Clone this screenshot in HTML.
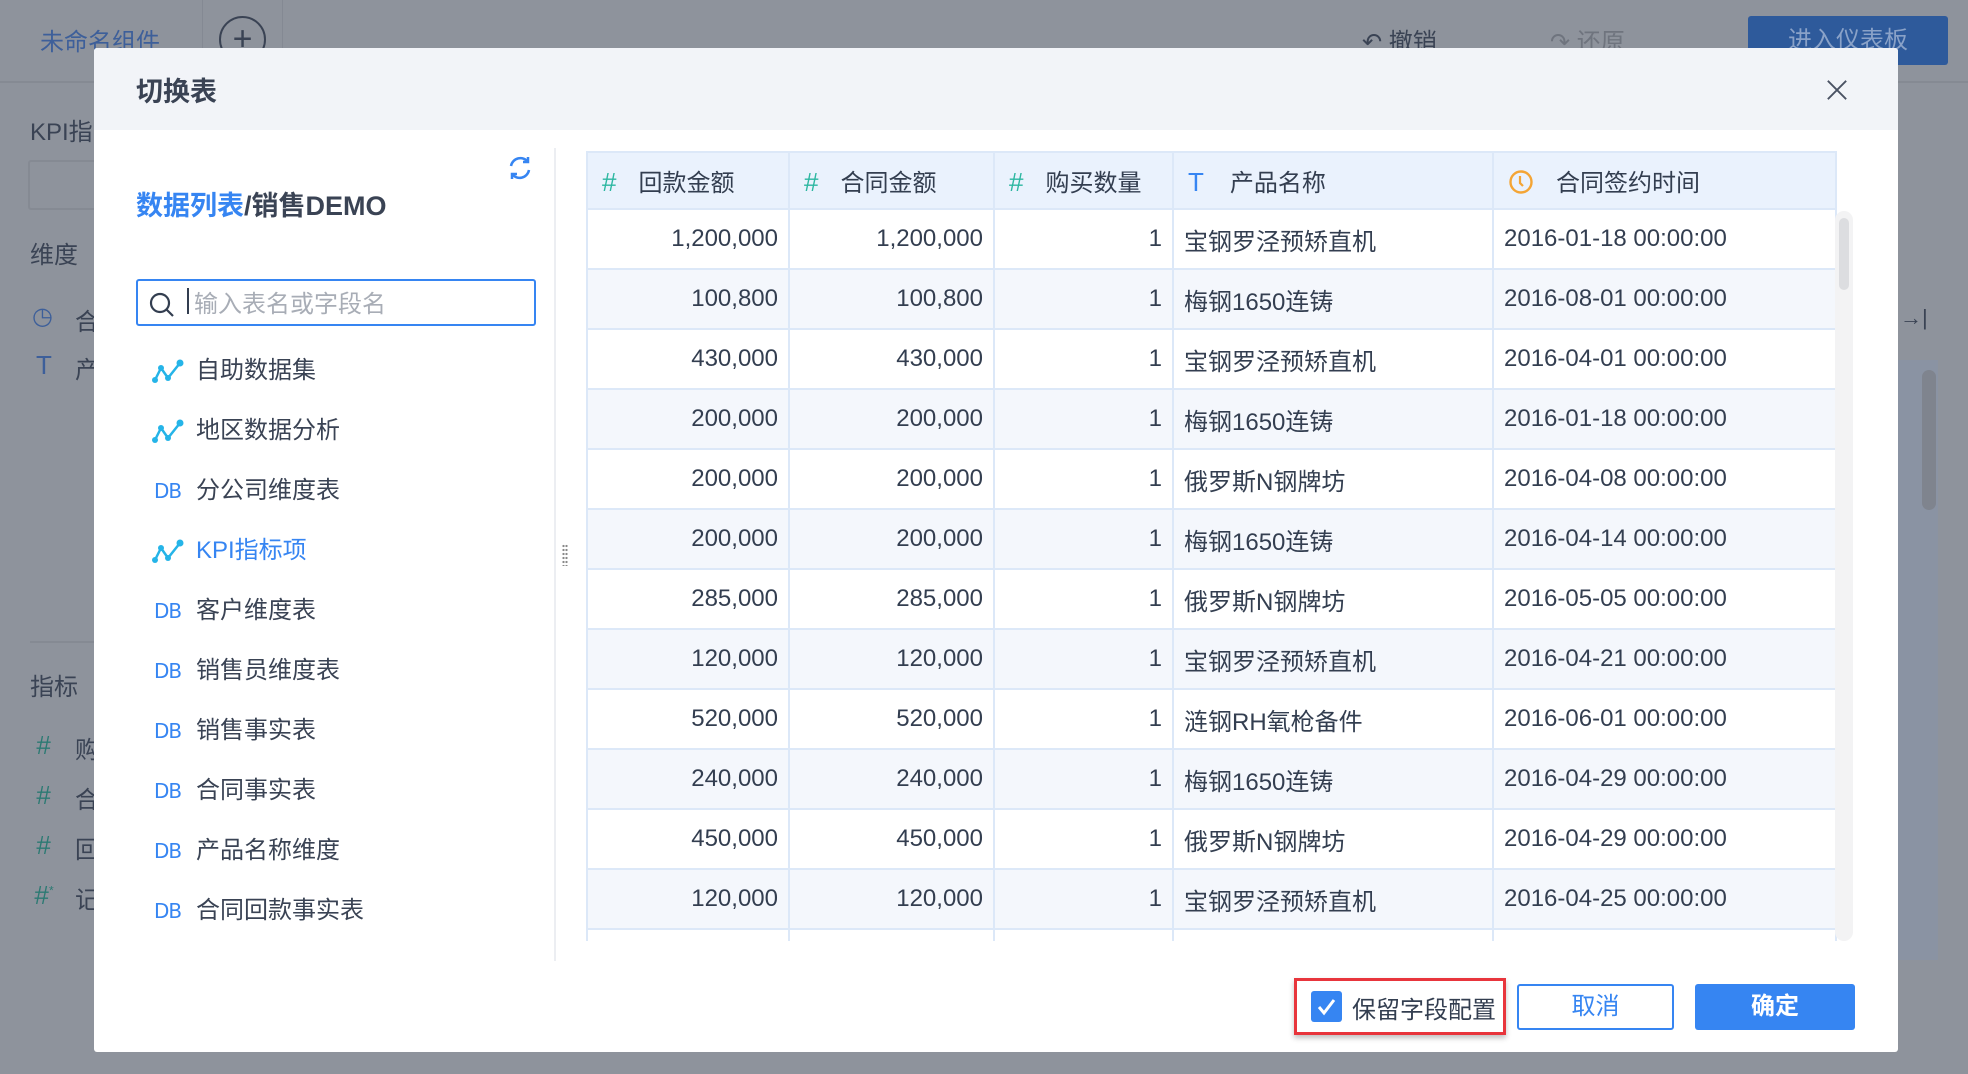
<!DOCTYPE html>
<html><head><meta charset="utf-8"><style>
*{margin:0;padding:0;box-sizing:border-box}
body{width:1968px;height:1074px;overflow:hidden;background:#8e939c;font-family:"Liberation Sans","Noto Sans CJK SC",sans-serif;position:relative;color:#333e50}
.a{position:absolute;white-space:nowrap}
.bg{color:#3a4354}
.modal{position:absolute;left:94px;top:48px;width:1804px;height:1004px;background:#fff;border-radius:3px;overflow:hidden}
.hdr{position:absolute;left:0;top:0;width:100%;height:82px;background:#f2f4f8}
.item{position:absolute;left:42px;width:380px;white-space:nowrap;font-size:24px;color:#3a4354;height:30px;line-height:30px}
.item .ic{position:absolute;left:15px;top:0;width:34px;height:30px}
.item span.t{position:absolute;left:60px;top:0}
.db{font-family:"DejaVu Sans",sans-serif;font-size:20px;color:#3685f2;position:absolute;left:18px;top:0;letter-spacing:-1px}
table{border-collapse:collapse;position:absolute;left:492px;top:103px;table-layout:fixed}
td,th{border:2px solid #dce8f8;height:60px;font-size:24px;font-weight:normal;color:#333e50;padding:0 10px;white-space:nowrap}
th{height:57px;background:#eaf2fd;text-align:left;padding-left:14px}
tr:nth-child(odd) td{background:#f4f7fc}
td.n{text-align:right}
.hash{color:#2db7a1;font-size:26px;margin-right:22px}
</style></head><body>
<div class="a" style="left:40px;top:22px;font-size:24px;color:#3d5f9a">未命名组件</div>
<div class="a" style="left:202px;top:0;width:1px;height:82px;background:#848993"></div>
<div class="a" style="left:219px;top:16px;width:47px;height:47px;border:2px solid #3a4354;border-radius:50%;text-align:center;line-height:42px;font-size:34px;color:#3a4354">+</div>
<div class="a" style="left:282px;top:0;width:1px;height:82px;background:#848993"></div>
<div class="a" style="left:0;top:81px;width:1968px;height:2px;background:#858a93"></div>
<div class="a bg" style="left:1362px;top:22px;font-size:24px">↶ 撤销</div>
<div class="a" style="left:1550px;top:22px;font-size:24px;color:#6f747e">↷ 还原</div>
<div class="a" style="left:1748px;top:16px;width:200px;height:49px;background:#2e5a9b;border-radius:3px;color:#8aa2c8;font-size:24px;text-align:center;line-height:49px">进入仪表板</div>
<div class="a bg" style="left:30px;top:112px;font-size:24px">KPI指</div>
<div class="a" style="left:28px;top:160px;width:80px;height:50px;border:2px solid #858a93;border-radius:3px"></div>
<div class="a bg" style="left:30px;top:235px;font-size:24px">维度</div>
<div class="a" style="left:32px;top:302px;font-size:24px;color:#3d5f9a">◷</div>
<div class="a bg" style="left:75px;top:302px;font-size:24px">合</div>
<div class="a" style="left:36px;top:350px;font-size:26px;color:#3d5f9a">T</div>
<div class="a bg" style="left:75px;top:350px;font-size:24px">产</div>
<div class="a" style="left:30px;top:641px;width:70px;height:2px;background:#858a93"></div>
<div class="a bg" style="left:30px;top:667px;font-size:24px">指标</div>
<div class="a" style="left:36px;top:730px;font-size:26px;color:#2c7a73;font-style:italic">#</div><div class="a bg" style="left:75px;top:730px;font-size:24px">购</div>
<div class="a" style="left:36px;top:780px;font-size:26px;color:#2c7a73;font-style:italic">#</div><div class="a bg" style="left:75px;top:780px;font-size:24px">合</div>
<div class="a" style="left:36px;top:830px;font-size:26px;color:#2c7a73;font-style:italic">#</div><div class="a bg" style="left:75px;top:830px;font-size:24px">回</div>
<div class="a" style="left:34px;top:880px;font-size:26px;color:#2c7a73;font-style:italic">#<sup style="font-size:12px">*</sup></div><div class="a bg" style="left:75px;top:880px;font-size:24px">记</div>
<div class="a bg" style="left:1900px;top:305px;font-size:22px">→|</div>
<div class="a" style="left:1896px;top:360px;width:42px;height:600px;background:#8a93a3"></div>
<div class="a" style="left:1922px;top:370px;width:14px;height:140px;background:#7f848e;border-radius:7px"></div>

<div class="modal">
 <div class="hdr"></div>
 <div class="a" style="left:42px;top:22px;font-size:27px;font-weight:bold;color:#3a4354">切换表</div>
 <svg class="a" style="left:1732px;top:31px" width="22" height="22" viewBox="0 0 24 24"><path d="M2 2L22 22M22 2L2 22" stroke="#4a5263" stroke-width="2"/></svg>
 <svg class="a" style="left:412px;top:106px" width="28" height="28" viewBox="0 0 28 28" fill="none" stroke="#3685f2" stroke-width="2.5"><path d="M5 12A9.5 9.5 0 0 1 22 8"/><path d="M23 16A9.5 9.5 0 0 1 6 20"/><path d="M22 3V8H17"/><path d="M6 25V20H11"/></svg>
 <div class="a" style="left:42px;top:136px;font-size:27px;font-weight:bold;color:#3a4354"><span style="color:#3685f2">数据列表</span>/销售DEMO</div>
 <div class="a" style="left:42px;top:231px;width:400px;height:47px;border:2px solid #3685f2;border-radius:3px"></div>
 <svg class="a" style="left:54px;top:243px" width="28" height="28" viewBox="0 0 28 28" fill="none" stroke="#333e50" stroke-width="2.2"><circle cx="12" cy="12" r="9"/><path d="M18.5 18.5L25 25"/></svg>
 <div class="a" style="left:93px;top:240px;width:2px;height:26px;background:#333e50"></div>
 <div class="a" style="left:100px;top:236px;font-size:24px;color:#a8adb6">输入表名或字段名</div>

 <div class="item" style="top:308px"><svg class="ic" viewBox="0 0 34 30"><path d="M4 24L10 12L17 22L29 7" stroke="#25b4e8" stroke-width="2.5" fill="none"/><circle cx="4" cy="24" r="3" fill="#25b4e8"/><circle cx="10" cy="12" r="3" fill="#25b4e8"/><circle cx="17" cy="22" r="3" fill="#25b4e8"/><circle cx="29" cy="7" r="3.5" fill="#25b4e8"/></svg><span class="t">自助数据集</span></div>
 <div class="item" style="top:368px"><svg class="ic" viewBox="0 0 34 30"><path d="M4 24L10 12L17 22L29 7" stroke="#25b4e8" stroke-width="2.5" fill="none"/><circle cx="4" cy="24" r="3" fill="#25b4e8"/><circle cx="10" cy="12" r="3" fill="#25b4e8"/><circle cx="17" cy="22" r="3" fill="#25b4e8"/><circle cx="29" cy="7" r="3.5" fill="#25b4e8"/></svg><span class="t">地区数据分析</span></div>
 <div class="item" style="top:428px"><span class="db">DB</span><span class="t">分公司维度表</span></div>
 <div class="item" style="top:488px;color:#3685f2"><svg class="ic" viewBox="0 0 34 30"><path d="M4 24L10 12L17 22L29 7" stroke="#25b4e8" stroke-width="2.5" fill="none"/><circle cx="4" cy="24" r="3" fill="#25b4e8"/><circle cx="10" cy="12" r="3" fill="#25b4e8"/><circle cx="17" cy="22" r="3" fill="#25b4e8"/><circle cx="29" cy="7" r="3.5" fill="#25b4e8"/></svg><span class="t">KPI指标项</span></div>
 <div class="item" style="top:548px"><span class="db">DB</span><span class="t">客户维度表</span></div>
 <div class="item" style="top:608px"><span class="db">DB</span><span class="t">销售员维度表</span></div>
 <div class="item" style="top:668px"><span class="db">DB</span><span class="t">销售事实表</span></div>
 <div class="item" style="top:728px"><span class="db">DB</span><span class="t">合同事实表</span></div>
 <div class="item" style="top:788px"><span class="db">DB</span><span class="t">产品名称维度</span></div>
 <div class="item" style="top:848px"><span class="db">DB</span><span class="t">合同回款事实表</span></div>

 <div class="a" style="left:460px;top:100px;width:2px;height:813px;background:#eceef2"></div>
 <div class="a" style="left:468px;top:496px;width:6px;height:22px;background:radial-gradient(circle,#888 1px,transparent 1.3px) 0 0/3px 4px"></div>

 <div class="a" style="left:492px;top:103px;width:1251px;height:790px;overflow:hidden">
 <table style="left:0;top:0">
  <colgroup><col style="width:202px"><col style="width:205px"><col style="width:179px"><col style="width:320px"><col style="width:343px"></colgroup>
  <tr><th><span class="hash">#</span>回款金额</th><th><span class="hash">#</span>合同金额</th><th><span class="hash">#</span>购买数量</th><th><span style="color:#3685f2;font-size:26px;margin-right:26px">T</span>产品名称</th><th><svg width="26" height="26" viewBox="0 0 26 26" style="vertical-align:-4px;margin-right:22px"><circle cx="13" cy="13" r="10.5" fill="none" stroke="#f4a535" stroke-width="2.4"/><path d="M12 7V14L15 17" stroke="#f4a535" stroke-width="2.2" fill="none"/></svg>合同签约时间</th></tr>
  <tr><td class="n">1,200,000</td><td class="n">1,200,000</td><td class="n">1</td><td>宝钢罗泾预矫直机</td><td>2016-01-18 00:00:00</td></tr>
  <tr><td class="n">100,800</td><td class="n">100,800</td><td class="n">1</td><td>梅钢1650连铸</td><td>2016-08-01 00:00:00</td></tr>
  <tr><td class="n">430,000</td><td class="n">430,000</td><td class="n">1</td><td>宝钢罗泾预矫直机</td><td>2016-04-01 00:00:00</td></tr>
  <tr><td class="n">200,000</td><td class="n">200,000</td><td class="n">1</td><td>梅钢1650连铸</td><td>2016-01-18 00:00:00</td></tr>
  <tr><td class="n">200,000</td><td class="n">200,000</td><td class="n">1</td><td>俄罗斯N钢牌坊</td><td>2016-04-08 00:00:00</td></tr>
  <tr><td class="n">200,000</td><td class="n">200,000</td><td class="n">1</td><td>梅钢1650连铸</td><td>2016-04-14 00:00:00</td></tr>
  <tr><td class="n">285,000</td><td class="n">285,000</td><td class="n">1</td><td>俄罗斯N钢牌坊</td><td>2016-05-05 00:00:00</td></tr>
  <tr><td class="n">120,000</td><td class="n">120,000</td><td class="n">1</td><td>宝钢罗泾预矫直机</td><td>2016-04-21 00:00:00</td></tr>
  <tr><td class="n">520,000</td><td class="n">520,000</td><td class="n">1</td><td>涟钢RH氧枪备件</td><td>2016-06-01 00:00:00</td></tr>
  <tr><td class="n">240,000</td><td class="n">240,000</td><td class="n">1</td><td>梅钢1650连铸</td><td>2016-04-29 00:00:00</td></tr>
  <tr><td class="n">450,000</td><td class="n">450,000</td><td class="n">1</td><td>俄罗斯N钢牌坊</td><td>2016-04-29 00:00:00</td></tr>
  <tr><td class="n">120,000</td><td class="n">120,000</td><td class="n">1</td><td>宝钢罗泾预矫直机</td><td>2016-04-25 00:00:00</td></tr>
  <tr><td></td><td></td><td></td><td></td><td></td></tr>
 </table>
 </div>
 <div class="a" style="left:1741px;top:163px;width:18px;height:730px;background:#f3f3f4;border-radius:9px"></div>
 <div class="a" style="left:1745px;top:170px;width:10px;height:72px;background:#dcdde0;border-radius:5px"></div>

 <div class="a" style="left:1200px;top:930px;width:212px;height:57px;border:3px solid #e8353c;box-shadow:0 3px 5px rgba(0,0,0,.25)"></div>
 <div class="a" style="left:1217px;top:943px;width:31px;height:31px;background:#3685f2;border-radius:3px"><svg width="31" height="31" viewBox="0 0 31 31"><path d="M8 16L13 22L23 9" stroke="#fff" stroke-width="3" fill="none"/></svg></div>
 <div class="a" style="left:1258px;top:942px;font-size:24px;color:#333e50">保留字段配置</div>
 <div class="a" style="left:1423px;top:936px;width:157px;height:46px;border:2px solid #3685f2;border-radius:3px;color:#3685f2;font-size:24px;text-align:center;line-height:42px">取消</div>
 <div class="a" style="left:1601px;top:936px;width:160px;height:46px;background:#3685f2;border-radius:3px;color:#fff;font-size:24px;text-align:center;line-height:46px;font-weight:bold">确定</div>
</div>
</body></html>
